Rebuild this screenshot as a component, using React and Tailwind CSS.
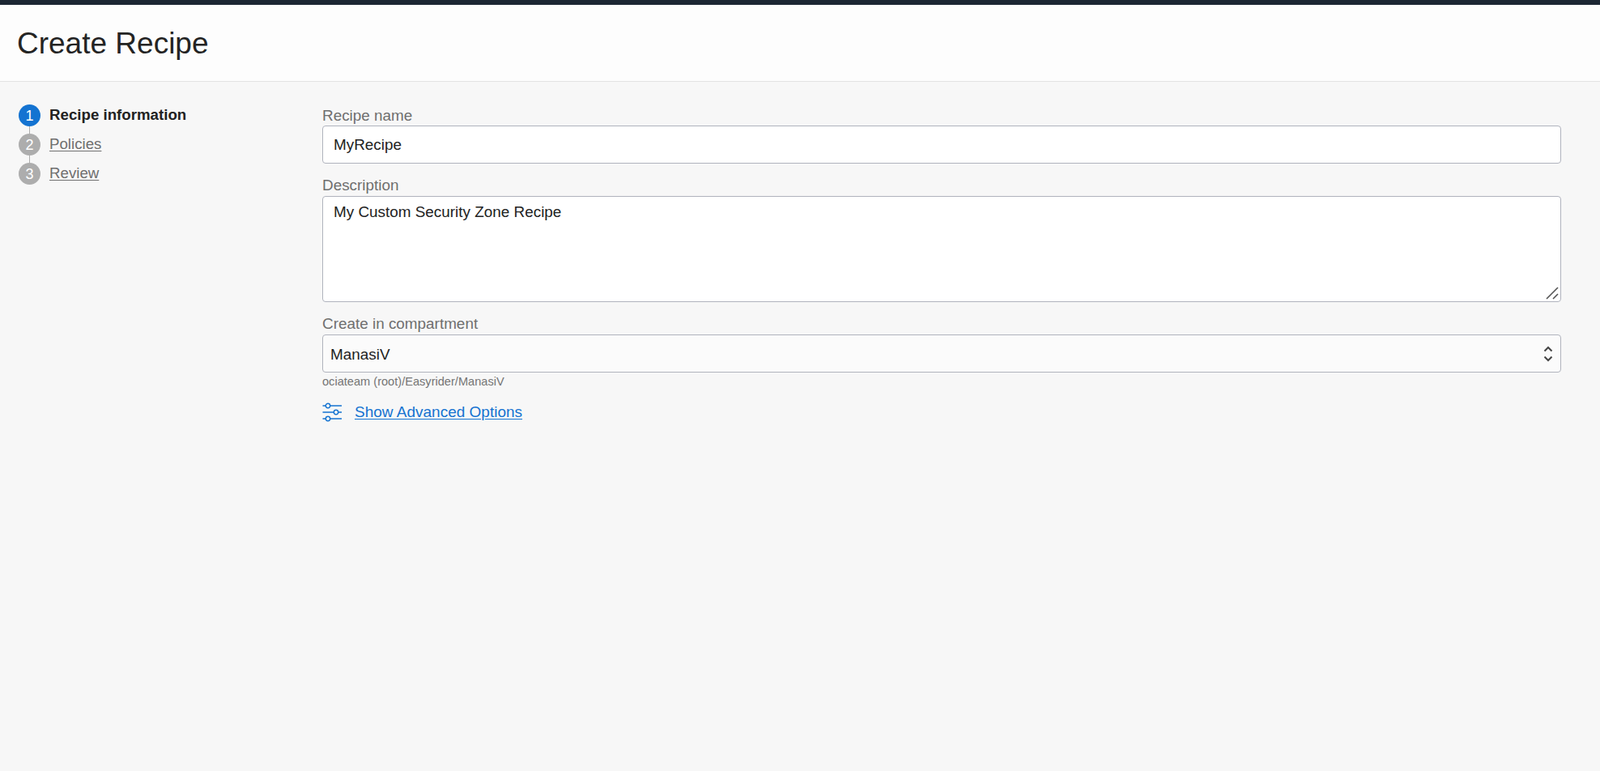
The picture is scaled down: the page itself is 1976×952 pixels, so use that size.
const font = { fontFamily: '"Liberation Sans", Arial, sans-serif' };

function Step({ n, label, active, line }) {
  return (
    <div className="relative flex h-[36px] items-start">
      <div
        className={`z-10 flex h-[27px] w-[27px] items-center justify-center rounded-full text-[18px] leading-none text-white ${
          active ? "bg-[#1473d1]" : "bg-[#adadad]"
        }`}
      >
        {n}
      </div>
      {line && <div className="absolute left-[13px] top-[27px] h-[10px] w-px bg-[#adadad]" />}
      {active ? (
        <span className="ml-[11px] text-[18.7px] font-bold leading-[26px] text-[#222222]">{label}</span>
      ) : (
        <a className="ml-[11px] text-[18.7px] leading-[26px] text-[#6f6f6f] underline underline-offset-2">{label}</a>
      )}
    </div>
  );
}

function Label({ children }) {
  return <div className="h-[23px] text-[18.9px] leading-[19px] text-[#6f6f6f]">{children}</div>;
}

export default function App() {
  return (
    <div style={font} className="flex h-[952px] flex-col overflow-hidden bg-[#f7f7f7]">
      <div className="h-[6px] bg-[#1c2733]" />
      <header className="flex h-[95px] items-center border-b border-[#e3e3e3] bg-[#fdfdfd] pl-[21px]">
        <h1 className="text-[37px] font-normal leading-none text-[#242424]">Create Recipe</h1>
      </header>
      <div className="flex pt-[28px]">
        <nav className="w-[398px] shrink-0 pl-[23px]">
          <Step n="1" label="Recipe information" active line />
          <Step n="2" label="Policies" line />
          <Step n="3" label="Review" />
        </nav>
        <main className="mt-[3px] w-[1530px] shrink-0">
          <div className="h-[23px] text-[18.9px] leading-[21px] text-[#6f6f6f]">Recipe name</div>
          <input
            readOnly
            value="MyRecipe"
            className="block h-[47px] w-full rounded-[4px] border border-[#b0b3bd] bg-white px-[13px] text-[18.9px] text-[#222] outline-none"
          />
          <div className="mt-[17px]">
            <Label>Description</Label>
          </div>
          <div className="relative">
            <textarea
              readOnly
              value="My Custom Security Zone Recipe"
              className="block h-[131px] w-full resize-none rounded-[4px] border border-[#b0b3bd] bg-white px-[13px] py-[8px] text-[18.9px] leading-[22px] text-[#222] outline-none"
            />
            <svg className="absolute bottom-[3px] right-[3px]" width="16" height="16" viewBox="0 0 16 16">
              <path d="M1 15 15 1M9 15l6-6" stroke="#555" strokeWidth="1.6" fill="none" />
            </svg>
          </div>
          <div className="mt-[17px]">
            <Label>Create in compartment</Label>
          </div>
          <div className="flex h-[47px] items-center justify-between rounded-[4px] border border-[#b0b3bd] bg-[#fbfbfb] pl-[9px] pr-[8px] text-[18.9px] text-[#1f1f1f]">
            <span className="pt-[4px]">ManasiV</span>
            <svg width="14" height="24" viewBox="0 0 14 24" fill="none" stroke="#444" strokeWidth="2">
              <path d="M2.5 8.5 7 4 11.5 8.5M2.5 15.5 7 20 11.5 15.5" />
            </svg>
          </div>
          <div className="mt-[2px] h-[18px] text-[14.6px] leading-[18px] text-[#757575]">ociateam (root)/Easyrider/ManasiV</div>
          <div className="mt-[16px] flex h-[26px] items-center">
            <svg width="24" height="24" viewBox="0 0 24 24" fill="none" stroke="#1473d1" strokeWidth="1.4">
              <path d="M0.5 4H4M10 4H24M0.5 12H14M20 12H24M0.5 20H4M10 20H24" />
              <circle cx="7" cy="4" r="2.7" />
              <circle cx="17" cy="12" r="2.7" />
              <circle cx="7" cy="20" r="2.7" />
            </svg>
            <a className="ml-[16px] text-[19px] text-[#1473d1] underline underline-offset-2">Show Advanced Options</a>
          </div>
        </main>
      </div>
    </div>
  );
}
